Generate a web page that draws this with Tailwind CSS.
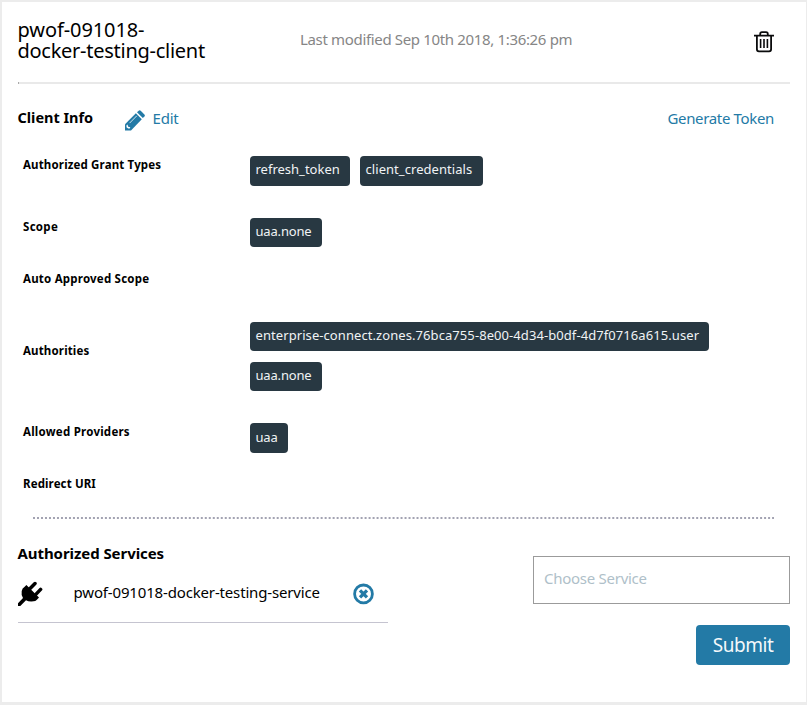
<!DOCTYPE html>
<html lang="en">
<head>
<meta charset="utf-8">
<title>Client details</title>
<script src="https://cdn.jsdelivr.net/npm/@tailwindcss/browser@4"></script>
</head>
<body class="bg-white font-['Noto_Sans',sans-serif] text-black">
<main class="flex h-[705px] w-[807px] flex-col border-t-2 border-r border-b-3 border-l-2 border-[#ececec] bg-white pr-4 pl-4">
  <header class="flex h-20 shrink-0 items-start whitespace-nowrap">
    <h1 class="w-[282px] pt-[17px] text-[20px] leading-[21px] tracking-[-0.27px]"><span class="-ml-[0.5px] block tracking-[-0.1px]">pwof-091018-</span><span class="-ml-[0.5px] block">docker-testing-client</span></h1>
    <p class="pt-[26px] text-[15px] leading-[22px] tracking-[-0.34px] text-[#868686]">Last modified Sep 10th 2018, 1:36:26 pm</p>
    <button class="mt-[29px] mr-4 ml-auto" aria-label="Delete client">
      <svg class="block" width="20" height="22" viewBox="0 0 20 22" fill="none" stroke="#0a0b0c">
        <path d="M0 4.6H20M6.2 4.4V3Q6.2 1.2 8 1.2H12Q13.8 1.2 13.8 3V4.4" stroke-width="1.8"/>
        <path d="M2.9 4.6V18.3Q2.9 20.3 4.9 20.3H15.1Q17.1 20.3 17.1 18.3V4.6" stroke-width="1.8"/>
        <path d="M6.6 8V17M10 8V17M13.4 8V17" stroke-width="1.6"/>
      </svg>
    </button>
  </header>
  <div class="h-0.5 shrink-0 border-l border-[#aaa] bg-[#e9e9e9]"></div>

  <section class="flex h-[56px] shrink-0 items-start pt-[22px] whitespace-nowrap">
    <h2 class="-ml-[0.5px] w-[107.5px] text-[14.5px] leading-[22px] font-bold tracking-[-0.03px]">Client Info</h2>
    <a class="flex text-[15px] leading-[24px] tracking-[-0.2px] text-[#237aa6]">
      <svg class="mt-1 mr-[7.5px]" width="20" height="21" viewBox="0 0 20 21" fill="#237aa6">
        <path d="M0 20V14.2L10.9 3.3 16.8 9.2 6 20.4H0Z"/>
        <path d="M12 2.3 13.7.7Q14.7-.2 15.7.7L19.4 4.4Q20.3 5.4 19.4 6.4L17.8 8.1Z"/>
        <path d="M4.6 13.1 11.8 5.8" stroke="#fff" stroke-width=".8"/>
        <path d="M1.5 15.2 2.5 14.5 3.2 16.8 5.3 17.2 4.8 18.5 3.2 18.5 1.5 17.2Z" fill="#fff"/>
      </svg>Edit</a>
    <a class="mr-4 ml-auto text-[15px] leading-[24px] tracking-[-0.34px] text-[#237aa6]">Generate Token</a>
  </section>

  <dl class="grid shrink-0 grid-cols-[232px_1fr] grid-rows-[52px_62px_42px_102px_60px_59px] text-[12px] leading-[18px] whitespace-nowrap">
    <dt class="pt-4 pl-[5px] text-[11.5px] font-bold tracking-[0.15px]">Authorized Grant Types</dt>
    <dd class="flex gap-2.5 pt-4 text-[13px] text-[#f0f3f5]">
      <span class="h-[30px] w-[100px] rounded bg-[#283842] pt-1 pl-[5.5px]">refresh_token</span>
      <span class="h-[30px] w-[123px] rounded bg-[#283842] pt-1 pl-[5.5px] tracking-[0.06px]">client_credentials</span>
    </dd>
    <dt class="pt-[26px] pl-[5px] text-[11.5px] font-bold tracking-[0.3px]">Scope</dt>
    <dd class="pt-[26px] text-[13px] text-[#f0f3f5]"><span class="inline-block h-[29px] w-[72px] rounded bg-[#283842] pt-1 pl-[5.5px] tracking-[-0.17px]">uaa.none</span></dd>
    <dt class="pt-4 pl-[5px] text-[11.5px] font-bold tracking-[0.21px]">Auto Approved Scope</dt><dd></dd>
    <dt class="pt-[46px] pl-[5px] text-[11.5px] font-bold tracking-[0.15px]">Authorities</dt>
    <dd class="flex flex-col items-start gap-[11px] pt-[26px] text-[13px] text-[#f0f3f5]">
      <span class="h-[29px] w-[459px] rounded bg-[#283842] pt-1 pl-[5.5px] tracking-[0.075px]">enterprise-connect.zones.76bca755-8e00-4d34-b0df-4d7f0716a615.user</span>
      <span class="h-[29px] w-[72px] rounded bg-[#283842] pt-1 pl-[5.5px] tracking-[-0.17px]">uaa.none</span>
    </dd>
    <dt class="pt-[25px] pl-[5px] text-[11.5px] font-bold tracking-[0.24px]">Allowed Providers</dt>
    <dd class="pt-[25px] text-[13px] text-[#f0f3f5]"><span class="inline-block h-[30px] w-[38px] rounded bg-[#283842] pt-[5px] pl-[5.5px] tracking-[-0.2px]">uaa</span></dd>
    <dt class="pt-[17px] pl-[5px] text-[11.5px] font-bold tracking-[0.12px]">Redirect URI</dt><dd></dd>
  </dl>

  <svg class="ml-[15px] block shrink-0" width="741" height="2" viewBox="0 0 741 2"><path d="M0 1H741" stroke="#a3a3b2" stroke-width="2" stroke-dasharray="2 1.995"/></svg>

  <section class="flex justify-between whitespace-nowrap">
    <div class="w-[370px] pt-[23px]">
      <h2 class="-ml-[0.5px] text-[15px] leading-[22px] font-bold tracking-[-0.07px]">Authorized Services</h2>
      <div class="flex h-[59px] items-start border-b border-[#c5c4d0] pt-[17px]">
        <svg width="25" height="25" viewBox="0 0 25 25">
          <path d="M11.8 7.8 17 2.6M17.6 13.6 22.6 8.4" stroke="#000" stroke-width="3.5" stroke-linecap="round"/>
          <path d="M8.4 4 21 16.6 19.6 18Q18 20.5 13.5 20.5 10.3 20.6 8 19.2L2.3 24.9H0V22.3L5 16.9Q3 13.8 3.7 10 4.3 7.2 6.4 6Z"/>
        </svg>
        <span class="ml-[30.5px] w-[279px] text-[15px] leading-[22px] tracking-[-0.16px]">pwof-091018-docker-testing-service</span>
        <svg class="mt-0.5" width="21" height="22" viewBox="0 0 21 22" fill="none" stroke="#237aa6">
          <circle cx="10.5" cy="10.9" r="8.9" stroke-width="2.8"/>
          <path d="M7 7.4 14 14.4M14 7.4 7 14.4" stroke-width="3.3"/>
        </svg>
      </div>
    </div>
    <form class="flex w-[257px] flex-col items-end pt-[37px]">
      <div class="h-12 w-full border border-[#9b9b9b] pt-[10px] pl-[10px] text-[15px] leading-[22px] tracking-[-0.27px] text-[#afbfc9]">Choose Service</div>
      <button type="button" class="mt-[21px] h-10 w-[94px] rounded bg-[#237aa6] text-center text-[19px] leading-[39px] tracking-[-0.45px] text-[#f4f8fa]">Submit</button>
    </form>
  </section>
</main>
</body>
</html>
